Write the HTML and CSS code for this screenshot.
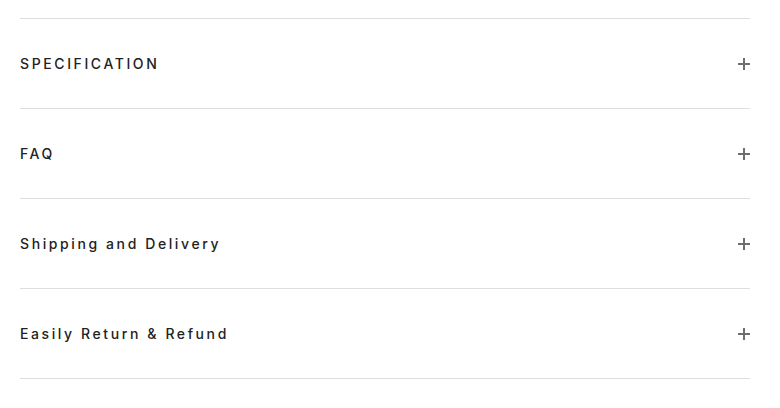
FILE: index.html
```html
<!DOCTYPE html>
<html>
<head>
<meta charset="utf-8">
<link rel="stylesheet" href="styles.css">
</head>
<body>
<div class="accordion">
  <div class="item"><span class="title">SPECIFICATION</span><span class="plus"></span></div>
  <div class="item"><span class="title">FAQ</span><span class="plus"></span></div>
  <div class="item"><span class="title">Shipping and Delivery</span><span class="plus"></span></div>
  <div class="item"><span class="title">Easily Return &amp; Refund</span><span class="plus"></span></div>
</div>
</body>
</html>
```
FILE: styles.css
```css
html, body { margin: 0; padding: 0; background: #fff; }
body { font-family: Inter, "Noto Sans", sans-serif; }
.accordion { padding: 18px 30px 0 20px; }
.item {
  height: 89px;
  border-top: 1px solid #dedede;
  display: flex;
  align-items: center;
  justify-content: space-between;
}
.item:last-child { border-bottom: 1px solid #dedede; }
.title {
  font-size: 14px;
  letter-spacing: 2.6px;
  color: #222;
  font-weight: 500;
}
.plus {
  position: relative;
  width: 12px;
  height: 12px;
  margin-top: 1px;
}
.plus::before, .plus::after {
  content: "";
  position: absolute;
  background: #6e6e6e;
}
.plus::before { left: 0; top: 5px; width: 12px; height: 1.5px; }
.plus::after { left: 5px; top: 0; width: 1.5px; height: 12px; }
```
